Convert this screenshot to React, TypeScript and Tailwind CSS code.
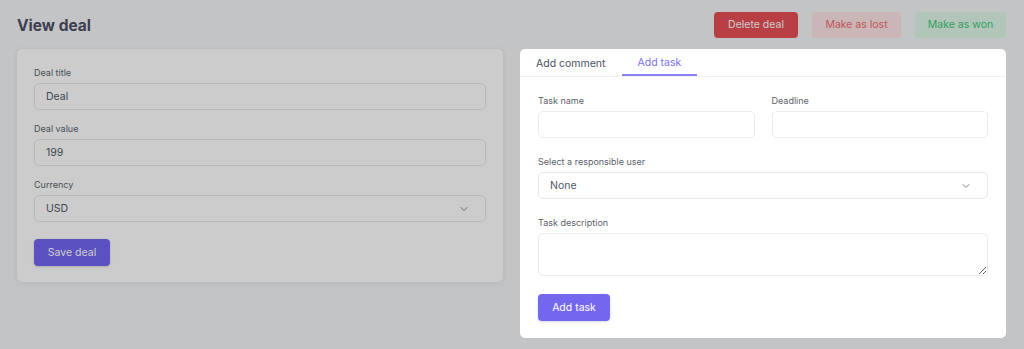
import React from "react";
import { ChevronDown } from "lucide-react";

function Label({ children }: { children: React.ReactNode }) {
  return <div className="text-[9px] leading-[14px] text-[#5b5f6b] mb-[3px]">{children}</div>;
}

function Field({ label, value }: { label: string; value: string }) {
  return (
    <div>
      <Label>{label}</Label>
      <div className="h-[27px] rounded-[5px] border border-[#e5e7eb] bg-white flex items-center px-[11px] text-[10.5px] text-[#545866]">
        {value}
      </div>
    </div>
  );
}

function SelectBox({ label, value }: { label: string; value: string }) {
  return (
    <div>
      <Label>{label}</Label>
      <div className="h-[27px] rounded-[5px] border border-[#e5e7eb] bg-white flex items-center justify-between pl-[11px] pr-[15px] text-[10.5px] text-[#545866]">
        <span>{value}</span>
        <ChevronDown size={12} strokeWidth={1.75} className="text-[#6b7280]" />
      </div>
    </div>
  );
}

export default function App() {
  return (
    <div
      className="relative min-h-[349px] w-[1024px] bg-[#f4f5f7]"
      style={{ fontFamily: "Inter, 'Noto Sans', sans-serif" }}
    >
      <div className="flex items-center justify-between pl-[17px] pr-[18px] pt-[12px] pb-[11px]">
        <h1 className="text-[15.5px] font-bold text-[#4d4f66] pt-[1px]">View deal</h1>
        <div className="flex gap-[14px] text-[10.5px]">
          <button className="h-[26px] w-[84px] rounded-[4px] bg-[#e64f55] text-white">Delete deal</button>
          <button className="h-[26px] w-[89px] rounded-[4px] bg-[#fee4e5] text-[#ef6a70]">Make as lost</button>
          <button className="h-[26px] w-[91px] rounded-[4px] bg-[#def8e8] text-[#3ec97a]">Make as won</button>
        </div>
      </div>

      <div className="grid grid-cols-[486px_486px] gap-[17px] px-[17px] items-start">
        <div className="rounded-[5px] bg-white shadow-[0_1px_6px_rgba(0,0,0,0.08)] px-[17px] pt-[17px] pb-[16px] flex flex-col gap-[12px]">
          <Field label="Deal title" value="Deal" />
          <Field label="Deal value" value="199" />
          <SelectBox label="Currency" value="USD" />
          <div className="pt-[4px]">
            <button className="h-[27px] w-[76px] rounded-[4px] bg-[#7266f0] text-white text-[10.5px] shadow-[0_1px_3px_rgba(0,0,0,0.15)]">
              Save deal
            </button>
          </div>
        </div>
        <div />
      </div>

      <div className="absolute inset-0 bg-black/20" />

      <div className="absolute left-[520px] top-[49px] w-[486px] rounded-[5px] bg-white">
        <div className="flex border-b border-[#eef0f3] h-[28px] text-[10.5px]">
          <div className="px-[16px] flex items-center pt-[2px] text-[#4b5060]">Add comment</div>
          <div className="px-[16px] flex items-center pt-[2px] text-[#7a6ff5] border-b-2 border-[#8a80f6]">Add task</div>
        </div>
        <div className="px-[18px] pt-[17px] pb-[17px] flex flex-col gap-[17px]">
          <div className="grid grid-cols-2 gap-[17px]">
            <div>
              <Label>Task name</Label>
              <div className="h-[27px] rounded-[5px] border border-[#e9ebef] bg-white" />
            </div>
            <div>
              <Label>Deadline</Label>
              <div className="h-[27px] rounded-[5px] border border-[#e9ebef] bg-white" />
            </div>
          </div>
          <SelectBox label="Select a responsible user" value="None" />
          <div>
            <Label>Task description</Label>
            <textarea className="block w-full h-[43px] rounded-[5px] border border-[#e9ebef] bg-white outline-none" />
          </div>
          <div>
            <button className="h-[27px] w-[72px] rounded-[4px] bg-[#7367f0] text-white text-[10.5px] shadow-[0_1px_3px_rgba(0,0,0,0.15)]">
              Add task
            </button>
          </div>
        </div>
      </div>
    </div>
  );
}
